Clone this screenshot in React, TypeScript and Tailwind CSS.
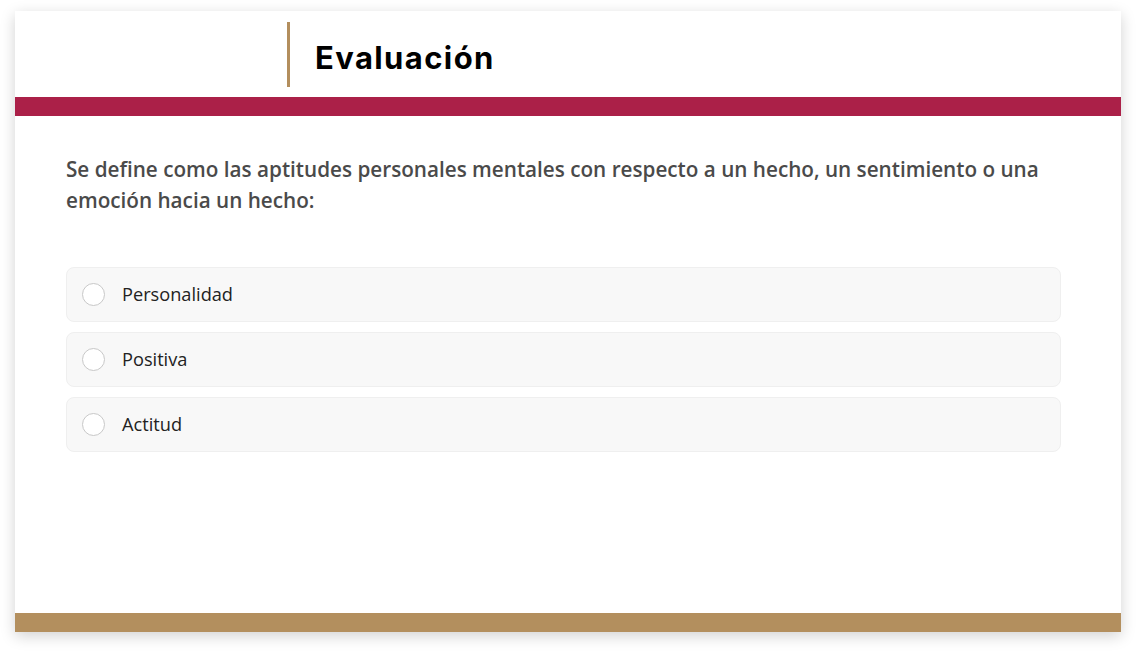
const options = ["Personalidad", "Positiva", "Actitud"]

export default function App() {
  return (
    <div className="min-h-screen bg-white pt-[11px] px-[15px]" style={{ fontFamily: "'Open Sans', sans-serif" }}>
      <div className="w-[1106px] h-[621px] flex flex-col bg-white shadow-[0_4px_14px_rgba(0,0,0,0.18)]">
        <header className="h-[86px] flex items-start pl-[272px] pt-[11px]">
          <div className="h-[65px] w-[3px] bg-[#b38e5d]" />
          <h1
            className="ml-[25px] mt-[13px] text-[31px] font-bold text-black tracking-[1.4px]"
            style={{ fontFamily: "Inter, sans-serif" }}
          >
            Evaluación
          </h1>
        </header>
        <div className="h-[19px] bg-[#ab2048]" />
        <main className="flex-1 px-[51px] pt-[38px]">
          <p className="text-[20.7px] leading-[31px] font-semibold text-[#4a4a4a] pr-[20px]">
            Se define como las aptitudes personales mentales con respecto a un hecho, un sentimiento o una emoción hacia un hecho:
          </p>
          <div className="mt-[51px] w-[995px] flex flex-col gap-[10px]">
            {options.map((o) => (
              <label
                key={o}
                className="h-[55px] flex items-center gap-[17px] pl-[15px] rounded-lg border border-[#efefef] bg-[#f8f8f8] cursor-pointer"
              >
                <span className="w-[23px] h-[23px] rounded-full border-[1.5px] border-[#c8c8c8] bg-white" />
                <span className="text-[18.2px] text-[#222]">{o}</span>
              </label>
            ))}
          </div>
        </main>
        <div className="h-[19px] bg-[#b38f5e]" />
      </div>
    </div>
  )
}
